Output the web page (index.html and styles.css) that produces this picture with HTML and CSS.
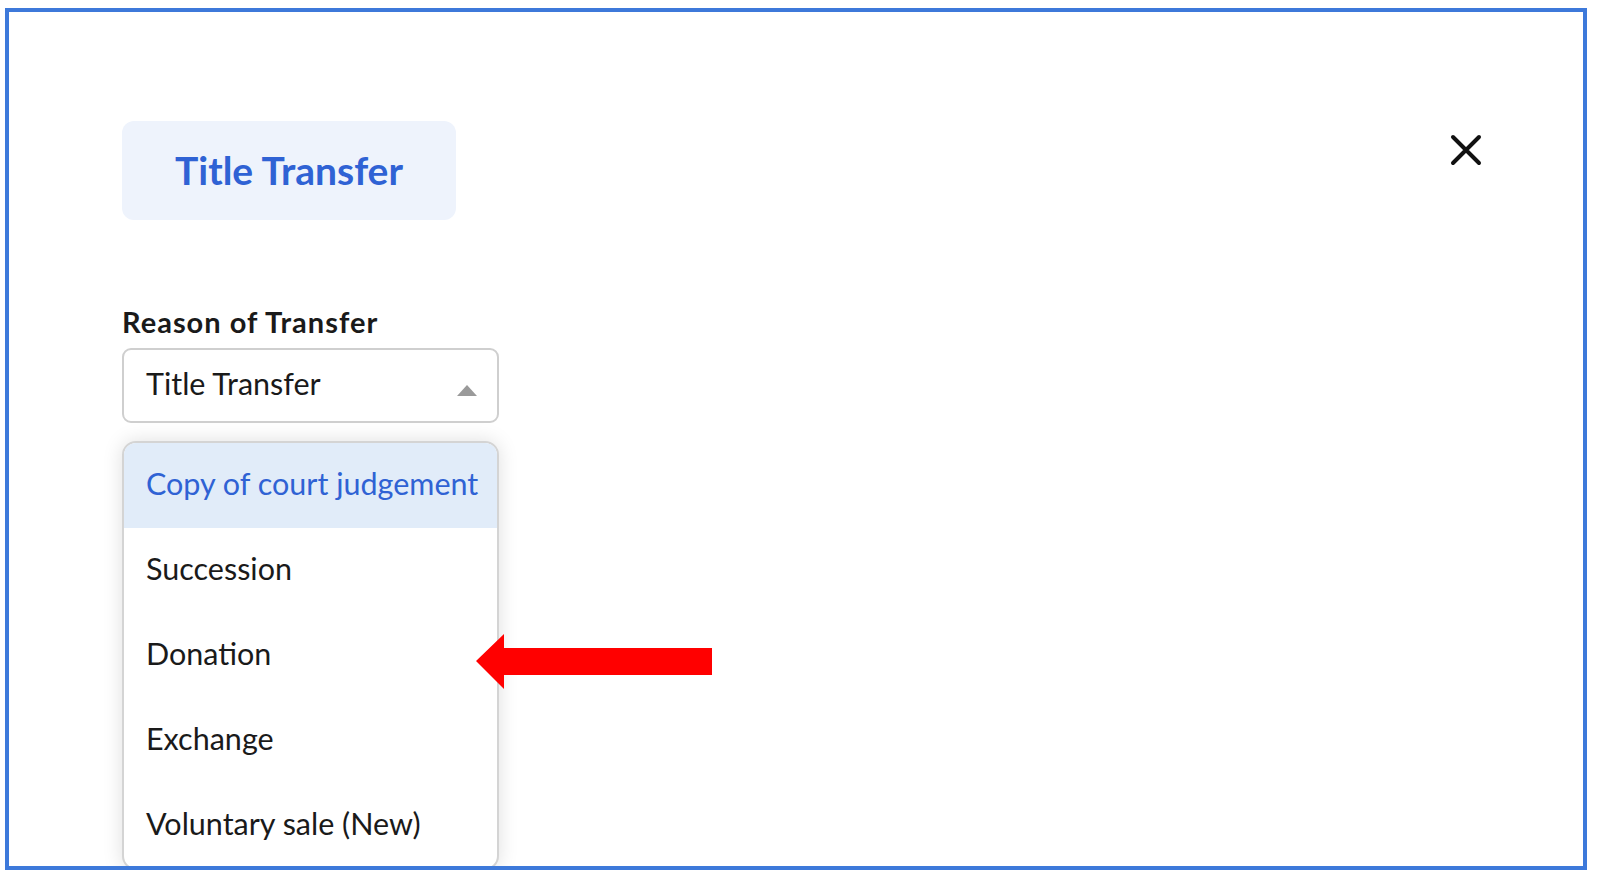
FILE: index.html
```html
<!DOCTYPE html>
<html lang="en">
<head>
<meta charset="utf-8">
<title>Title Transfer</title>
<link rel="stylesheet" href="styles.css">
</head>
<body>
<div class="frame">
  <div class="header">
    <div class="badge">Title Transfer</div>
    <button class="close" aria-label="Close">
      <svg width="32" height="32" viewBox="0 0 32 32"><path d="M3 3 L29 29 M29 3 L3 29" stroke="#111" stroke-width="4" stroke-linecap="round" fill="none"/></svg>
    </button>
  </div>
  <div class="field">
    <div class="label">Reason of Transfer</div>
    <div class="select">
      <span class="select-value">Title Transfer</span>
      <span class="caret"></span>
    </div>
    <div class="dropdown-wrap">
      <ul class="dropdown">
        <li class="option active">Copy of court judgement</li>
        <li class="option">Succession</li>
        <li class="option">Donation</li>
        <li class="option">Exchange</li>
        <li class="option">Voluntary sale (New)</li>
      </ul>
      <svg class="arrow" width="238" height="56" viewBox="0 0 238 56"><polygon points="0,27 28,0 28,14 236,14 236,41 28,41 28,55" fill="#ff0000"/></svg>
    </div>
  </div>
</div>
</body>
</html>
```
FILE: styles.css
```css
* { box-sizing: border-box; }
html, body { margin: 0; padding: 0; background: #fff; }
body { font-family: "Lato", "Noto Sans", sans-serif; color: #1c1c1c; }

.frame {
  margin: 8px 0 0 5px;
  width: 1582px;
  height: 862px;
  border: 4px solid #3d79da;
  padding: 109px 101px 0 113px;
  overflow: hidden;
}

.header {
  display: flex;
  justify-content: space-between;
  align-items: flex-start;
}

.badge {
  width: 334px;
  height: 99px;
  background: #eef3fc;
  border-radius: 12px;
  color: #2f62d4;
  font-weight: 700;
  font-size: 39px;
  display: flex;
  align-items: center;
  justify-content: center;
  padding-bottom: 2px;
}

.close {
  margin-top: 13px;
  width: 32px;
  height: 32px;
  padding: 0;
  border: 0;
  background: none;
  display: block;
}
.close svg { display: block; }

.field { margin-top: 85px; width: 377px; }

.label {
  font-weight: 700;
  font-size: 29px;
  line-height: 34px;
  letter-spacing: 1px;
  color: #1a1a1a;
  white-space: nowrap;
}

.select {
  margin-top: 9px;
  height: 75px;
  border: 2px solid #cfcfcf;
  border-radius: 9px;
  display: flex;
  align-items: center;
  justify-content: space-between;
  padding: 0 20px 5px 22px;
}
.select-value { font-size: 30.5px; color: #1a1a1a; white-space: nowrap; }
.caret {
  width: 0; height: 0;
  border-left: 10px solid transparent;
  border-right: 10px solid transparent;
  border-bottom: 11px solid #9a9a9a;
  margin-top: 14px;
}

.dropdown-wrap {
  position: relative;
  margin-top: 18px;
}

.dropdown {
  list-style: none;
  margin: 0;
  padding: 0;
  border: 2px solid #d4d4d4;
  border-radius: 14px;
  overflow: hidden;
  background: #fff;
  box-shadow: 0 0 20px rgba(0,0,0,0.13);
}
.option {
  height: 85px;
  display: flex;
  align-items: center;
  padding: 0 8px 5px 22px;
  font-size: 30.5px;
  color: #1a1a1a;
  white-space: nowrap;
}
.option.active { background: #e1ecf9; color: #2f62d4; }

.arrow {
  position: absolute;
  left: 354px;
  top: 193px;
}
```
